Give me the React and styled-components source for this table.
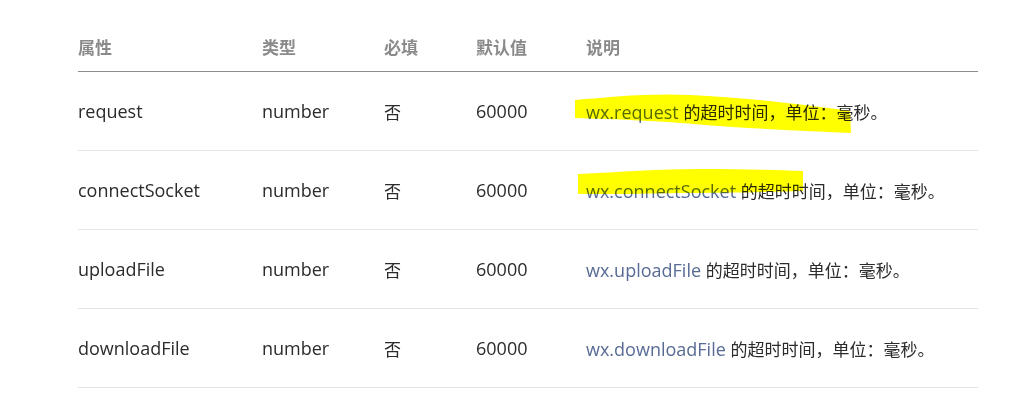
import React from "react";
import styled, { createGlobalStyle } from "styled-components";

const GlobalStyle = createGlobalStyle`
  html, body { margin: 0; padding: 0; background: #ffffff; }
  body {
    font-family: "Open Sans", "Noto Sans CJK SC", sans-serif;
    color: #2b2b2b;
  }
`;

const Page = styled.div`
  position: relative;
  width: 1023px;
  height: 411px;
  box-sizing: border-box;
  padding: 21px 0 0 78px;
  overflow: hidden;
`;

const Table = styled.div`
  width: 900px;
  display: flex;
  flex-direction: column;
`;

const Row = styled.div`
  display: grid;
  grid-template-columns: 184px 122px 92px 110px 392px;
  align-items: center;
  height: ${(p) => (p.$head ? "50px" : "78px")};
  border-bottom: 1px solid ${(p) => (p.$head ? "#8c8c8c" : "#e5e5e5")};
`;

const HeadCell = styled.div`
  font-size: 17px;
  font-weight: 700;
  color: #8a8a8a;
  white-space: nowrap;
`;

const Cell = styled.div`
  font-size: 18px;
  color: #2b2b2b;
  white-space: nowrap;
`;

const Han = styled.span`
  font-size: 17px;
`;

const Link = styled.span`
  color: #576b95;
`;

const Marker = styled.svg`
  position: absolute;
  left: 0;
  top: 0;
  width: 1023px;
  height: 411px;
  pointer-events: none;
  mix-blend-mode: multiply;
`;

const rows = [
  { name: "request" },
  { name: "connectSocket" },
  { name: "uploadFile" },
  { name: "downloadFile" },
];

export default function App() {
  return (
    <>
      <GlobalStyle />
      <Page>
        <Table>
          <Row $head>
            <HeadCell>属性</HeadCell>
            <HeadCell>类型</HeadCell>
            <HeadCell>必填</HeadCell>
            <HeadCell>默认值</HeadCell>
            <HeadCell>说明</HeadCell>
          </Row>
          {rows.map((r) => (
            <Row key={r.name}>
              <Cell>{r.name}</Cell>
              <Cell>number</Cell>
              <Cell>
                <Han>否</Han>
              </Cell>
              <Cell>60000</Cell>
              <Cell>
                <Link>wx.{r.name}</Link> <Han>的超时时间，单位：毫秒。</Han>
              </Cell>
            </Row>
          ))}
        </Table>
        <Marker viewBox="0 0 1023 411">
          <path
            d="M575,100 C610,97 650,93 690,95 C740,97 800,104 850,111 L851,133 C800,131 745,128 705,125 C660,121 615,119 575,118 Z"
            fill="#ffff00"
          />
          <path
            d="M578,174 C620,172 660,169 700,169 C740,169 775,170 803,171 L803,191 C770,192 720,193 680,193 C640,194 610,194 578,194 Z"
            fill="#ffff00"
          />
        </Marker>
      </Page>
    </>
  );
}
